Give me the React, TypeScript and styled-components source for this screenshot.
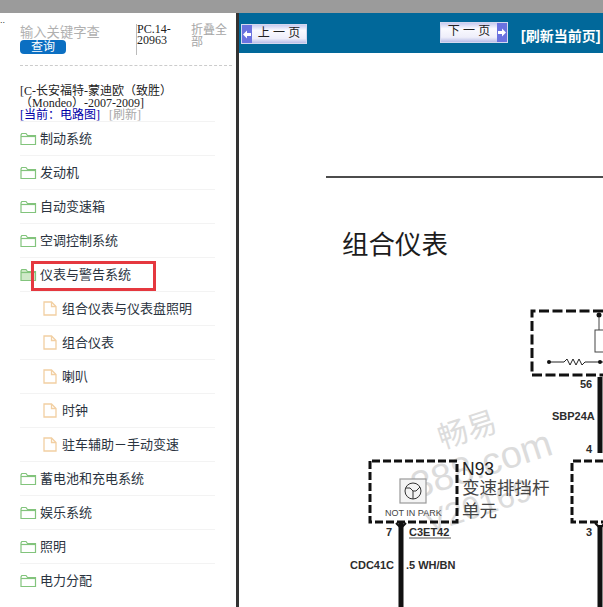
import React from 'react'
import styled, { createGlobalStyle } from 'styled-components'

const Global = createGlobalStyle`
  html, body {
    margin: 0;
    padding: 0;
    background: #fff;
    overflow: hidden;
  }
  * {
    box-sizing: border-box;
  }
`

const Page = styled.div`
  width: 603px;
  height: 607px;
  display: flex;
  flex-direction: column;
  overflow: hidden;
  font-family: 'Liberation Sans', 'Noto Sans CJK SC', sans-serif;
`

const TopBar = styled.div`
  height: 13px;
  flex: none;
  background: #9b9b9b;
`

const Body = styled.div`
  flex: 1;
  display: flex;
  min-height: 0;
`

const Sidebar = styled.aside`
  position: relative;
  width: 236px;
  flex: none;
  padding: 0 0 0 20px;
  background: #fff;
`

const Dots = styled.span`
  position: absolute;
  left: 0;
  top: 2px;
  font-size: 9px;
  line-height: 10px;
  color: #333;
`

const SearchRow = styled.div`
  height: 53px;
  width: 212px;
  display: flex;
  border-bottom: 1px dashed #ccc;
`

const SearchBox = styled.div`
  width: 116px;
  padding-top: 13px;
`

const Placeholder = styled.div`
  height: 14px;
  font-size: 13.3px;
  line-height: 14px;
  color: #b0b0b0;
  white-space: nowrap;
`

const SearchButton = styled.button`
  display: block;
  width: 46px;
  height: 14px;
  padding: 0;
  border: 0;
  border-radius: 4px;
  background: #0b6fc2;
  color: #fff;
  font: 12px/14px 'Liberation Sans', 'Noto Sans CJK SC', sans-serif;
  text-align: center;
`

const PartCode = styled.div`
  width: 55px;
  height: 31px;
  margin-top: 11px;
  border-left: 1px solid #bbb;
  font: 12px/11px 'Liberation Serif', 'Noto Sans CJK SC', serif;
  color: #222;
`

const Collapse = styled.div`
  width: 38px;
  margin-top: 11px;
  font-size: 12px;
  line-height: 12px;
  color: #a6a6a6;
`

const Title = styled.div`
  margin-top: 19px;
  width: 190px;
  font: 12px/12px 'Liberation Serif', 'Noto Sans CJK SC', serif;
  color: #222;
`

const CurrentLink = styled.span`
  color: #0000a8;
`

const RefreshLink = styled.span`
  margin-left: 9px;
  color: #a8a8a8;
`

const Tree = styled.ul`
  list-style: none;
  width: 195px;
  margin: 0;
  padding: 0;
`

const Node = styled.li<{ $child?: boolean }>`
  height: 34px;
  display: flex;
  align-items: center;
  gap: ${({ $child }) => ($child ? '5px' : '3px')};
  padding-left: ${({ $child }) => ($child ? '23px' : '0')};
  padding-bottom: 3px;
  border-top: 1px solid #f3f3f3;
  font-size: 13px;
  color: #2a3340;
  white-space: nowrap;

  svg {
    margin-top: 3px;
  }
`

const Highlight = styled.div`
  position: absolute;
  left: 31px;
  top: 248px;
  width: 125px;
  height: 30px;
  border: 3px solid #e5383f;
  pointer-events: none;
`

const Divider = styled.div`
  width: 3px;
  flex: none;
  background: #333;
`

const Main = styled.main`
  flex: 1;
  min-width: 0;
  display: flex;
  flex-direction: column;
`

const NavBar = styled.div`
  height: 40px;
  flex: none;
  display: flex;
  align-items: flex-start;
  padding-left: 2px;
  background: #01689a;
`

const PageButton = styled.div<{ $next?: boolean }>`
  display: flex;
  flex-direction: ${({ $next }) => ($next ? 'row-reverse' : 'row')};
  align-items: stretch;
  width: ${({ $next }) => ($next ? '68px' : '66px')};
  height: ${({ $next }) => ($next ? '21px' : '20px')};
  margin-top: ${({ $next }) => ($next ? '9px' : '11px')};
  margin-left: ${({ $next }) => ($next ? '133px' : '0')};
  border: 1px solid #d4d8ee;
  background: linear-gradient(#c7cbf0, #fafaff 30%, #eeeefa 75%, #b9bde8);
  font-size: 12px;
  color: #222;
`

const ArrowCap = styled.span`
  width: 10px;
  flex: none;
  display: flex;
  align-items: center;
  justify-content: center;
  background: #6a72e0;
`

const ButtonLabel = styled.span`
  flex: 1;
  line-height: 17px;
  text-align: center;
  white-space: pre;
`

const RefreshPage = styled.span`
  margin: 15px 0 0 13px;
  font-size: 14px;
  line-height: 16px;
  font-weight: 700;
  color: #fff;
  white-space: nowrap;
`

const Canvas = styled.div`
  position: relative;
  flex: 1;
  min-height: 0;
  overflow: hidden;
  background: #fff;
`

const Sheet = styled.svg`
  position: absolute;
  left: 0;
  top: 0;
  display: block;
`

const Folder = ({ open }: { open?: boolean }) => (
  <svg width="17" height="14" viewBox="0 0 17 14" fill="none" stroke="#82c47c" strokeWidth="1.2">
    <path d="M1 3V12.5H15.5V3.5H7.5L6 1.5H1.8L1 3Z" fill={open ? '#cfe9c8' : '#fff'} />
    <path d="M1 4.5H15.5" />
  </svg>
)

const Doc = () => (
  <svg width="14" height="15" viewBox="0 0 14 15" fill="#fff" stroke="#f2cfa2" strokeWidth="1.3">
    <path d="M1 1H8.5L13 5.5V14H1Z" />
    <path d="M8.5 1V5.5H13" fill="none" />
  </svg>
)

const Arrow = ({ right }: { right?: boolean }) => (
  <svg width="8" height="9" viewBox="0 0 8 9" fill="#fff">
    <path d={right ? 'M8 4.5L4 0.5V3H0V6H4V8.5Z' : 'M0 4.5L4 0.5V3H8V6H4V8.5Z'} />
  </svg>
)

const nodes: { label: string; child?: boolean; open?: boolean }[] = [
  { label: '制动系统' },
  { label: '发动机' },
  { label: '自动变速箱' },
  { label: '空调控制系统' },
  { label: '仪表与警告系统', open: true },
  { label: '组合仪表与仪表盘照明', child: true },
  { label: '组合仪表', child: true },
  { label: '喇叭', child: true },
  { label: '时钟', child: true },
  { label: '驻车辅助－手动变速', child: true },
  { label: '蓄电池和充电系统' },
  { label: '娱乐系统' },
  { label: '照明' },
  { label: '电力分配' },
]

const SANS = "'Liberation Sans', 'Noto Sans CJK SC', sans-serif"

// coordinates below are local to the canvas (page x - 239, page y - 53)
const Diagram = () => (
  <Sheet width="364" height="554" viewBox="0 0 364 554">
    <g fontFamily={SANS} fill="#dcdcdc">
      <text transform="translate(203 396) rotate(-18)" fontSize="30">畅易</text>
      <text transform="translate(165 450) rotate(-18)" fontSize="38">r388.com</text>
      <text transform="translate(190 480) rotate(-18)" fontSize="32">V20169</text>
    </g>

    <path d="M87 124H364" stroke="#111" strokeWidth="1.4" />
    <text x="103" y="201" fontSize="26.5" fontFamily={SANS} fill="#1c1c1c">组合仪表</text>

    <g fill="none" stroke="#111" strokeWidth="3" strokeDasharray="10 3.5">
      <path d="M364 258H293V322H364" />
      <path d="M131 408V469H218V408Z" strokeDasharray="8 3" />
      <path d="M364 408H333V469H364" strokeDasharray="8 3" />
    </g>

    <circle cx="360" cy="262" r="2.5" fill="#111" />
    <rect x="356" y="277" width="10" height="22" fill="none" stroke="#444" strokeWidth="1" />
    <path d="M360 264V277" fill="none" stroke="#444" strokeWidth="1" />
    <path d="M310 309H325L328 306L331 312L334 306L337 312L340 306L343 312L346 309H364" fill="none" stroke="#222" strokeWidth="1" />
    <circle cx="310" cy="309" r="2" fill="#111" />
    <circle cx="361" cy="309" r="2" fill="#111" />

    <rect x="161" y="426" width="26" height="24" fill="#f4f4f4" stroke="#999" strokeWidth="1.2" />
    <circle cx="174" cy="438" r="8" fill="none" stroke="#333" strokeWidth="1" />
    <path d="M167 435H171L174 438L177 438L181 434M174 438V446" fill="none" stroke="#333" strokeWidth="1" />

    <path d="M162 469V554M361 324V400M361 472V554" stroke="#111" strokeWidth="5" fill="none" />
    <path d="M157 470L162 475L167 470" stroke="#111" strokeWidth="2" fill="none" />
    <path d="M356 470L361 475L366 470" stroke="#111" strokeWidth="2" fill="none" />
    <path d="M170 485H212" stroke="#555" strokeWidth="1" />

    <g fontFamily={SANS} fontWeight="700" fontSize="11" fill="#2c2c2c">
      <text x="341" y="335">56</text>
      <text x="313" y="367">SBP24A</text>
      <text x="347" y="400">4</text>
      <text x="147" y="483">7</text>
      <text x="170" y="483">C3ET42</text>
      <text x="347" y="483">3</text>
      <text x="111" y="516">CDC41C</text>
      <text x="167" y="516">.5 WH/BN</text>
    </g>
    <text x="146" y="463" fontFamily={SANS} fontSize="9" fill="#444">NOT IN PARK</text>
    <text x="223" y="422" fontFamily={SANS} fontSize="17.5" fill="#222">N93</text>
    <g fontFamily={SANS} fontSize="17.5" fill="#444">
      <text x="223" y="441">变速排挡杆</text>
      <text x="223" y="464">单元</text>
    </g>
  </Sheet>
)

export default function App() {
  return (
    <Page>
      <Global />
      <TopBar />
      <Body>
        <Sidebar>
          <Dots>..</Dots>
          <SearchRow>
            <SearchBox>
              <Placeholder>输入关键字查</Placeholder>
              <SearchButton>查询</SearchButton>
            </SearchBox>
            <PartCode>
              PC.14-
              <br />
              20963
            </PartCode>
            <Collapse>折叠全部</Collapse>
          </SearchRow>
          <Title>
            [C-长安福特-蒙迪欧（致胜）（Mondeo）-2007-2009]
            <br />
            <CurrentLink>[当前：电路图]</CurrentLink>
            <RefreshLink>[刷新]</RefreshLink>
          </Title>
          <Tree>
            {nodes.map((n) => (
              <Node key={n.label} $child={n.child}>
                {n.child ? <Doc /> : <Folder open={n.open} />}
                {n.label}
              </Node>
            ))}
          </Tree>
          <Highlight />
        </Sidebar>
        <Divider />
        <Main>
          <NavBar>
            <PageButton>
              <ArrowCap>
                <Arrow />
              </ArrowCap>
              <ButtonLabel>上 一 页</ButtonLabel>
            </PageButton>
            <PageButton $next>
              <ArrowCap>
                <Arrow right />
              </ArrowCap>
              <ButtonLabel>下 一 页</ButtonLabel>
            </PageButton>
            <RefreshPage>[刷新当前页]</RefreshPage>
          </NavBar>
          <Canvas>
            <Diagram />
          </Canvas>
        </Main>
      </Body>
    </Page>
  )
}
